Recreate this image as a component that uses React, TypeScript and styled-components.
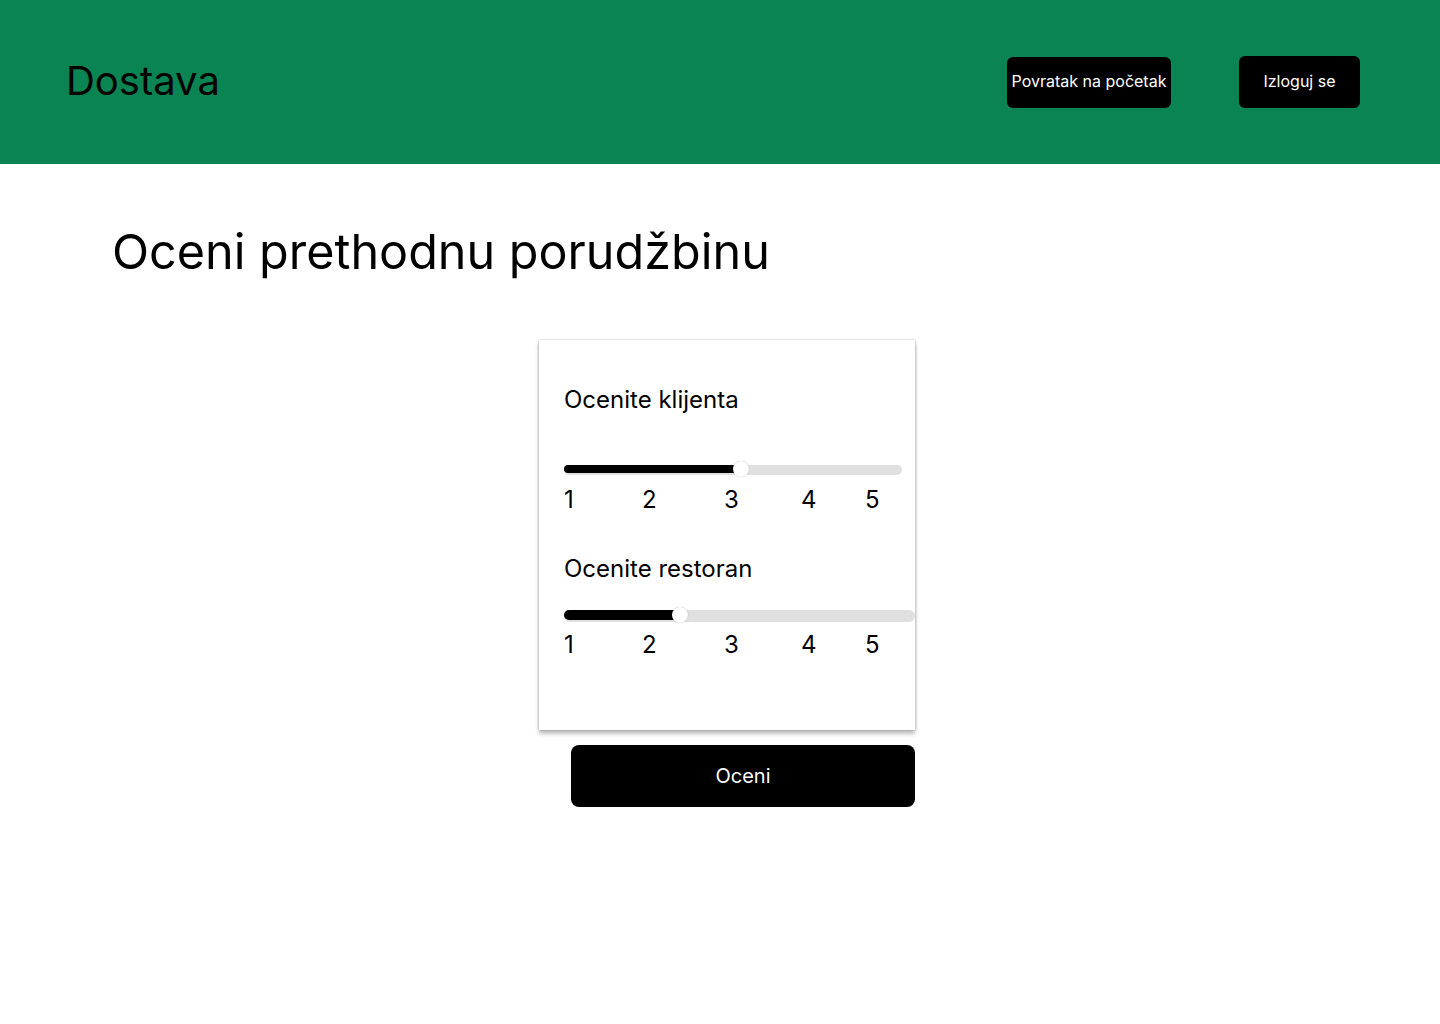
import styled, { createGlobalStyle } from 'styled-components';

const GlobalStyle = createGlobalStyle`
  body {
    margin: 0;
    background: #fff;
    font-family: Inter, "Noto Sans", sans-serif;
  }
`;

const Header = styled.header`
  height: 164px;
  background-color: #0a8452;
  display: flex;
  align-items: center;
  padding: 0 80px 0 66px;
  box-sizing: border-box;
`;

const Logo = styled.h1`
  margin: 0 auto 4px 0;
  font-size: 40px;
  font-weight: 400;
  color: #000;
`;

const NavButton = styled.button<{ $w: number; $h: number }>`
  width: ${(p) => p.$w}px;
  height: ${(p) => p.$h}px;
  margin-left: 68px;
  background: #000;
  color: #fff;
  border: none;
  border-radius: 6px;
  font-family: Inter, sans-serif;
  font-size: 16px;
  padding: 0 0 2px;
  white-space: nowrap;
`;

const Main = styled.main`
  padding: 59px 0 0 112px;
`;

const Title = styled.h2`
  margin: 0;
  font-size: 48.5px;
  line-height: 58px;
  font-weight: 400;
  color: #000;
`;

const Column = styled.div`
  margin: 59px 0 0 427px;
  width: 376px;
  display: flex;
  flex-direction: column;
  align-items: flex-end;
  gap: 15px;
`;

const Card = styled.div`
  width: 376px;
  height: 390px;
  box-sizing: border-box;
  padding: 45px 0 0 25px;
  background: #fff;
  box-shadow: 0 4px 4px rgba(0, 0, 0, 0.25), 1px 0 2px rgba(0, 0, 0, 0.15), -1px 0 2px rgba(0, 0, 0, 0.15);
`;

const Label = styled.div<{ $mt: number }>`
  margin-top: ${(p) => p.$mt}px;
  font-size: 24px;
  line-height: 29px;
  color: #000;
`;

const Track = styled.div<{ $w: number; $h: number; $mt: number }>`
  position: relative;
  width: ${(p) => p.$w}px;
  height: ${(p) => p.$h}px;
  margin-top: ${(p) => p.$mt}px;
  background: #e0e0e0;
  border-radius: ${(p) => p.$h / 2}px;
`;

const Fill = styled.div`
  height: calc(100% - 2px);
  background: #000;
  border-radius: 5px;
`;

const Thumb = styled.div`
  position: absolute;
  top: 50%;
  width: 16px;
  height: 16px;
  margin: -9px 0 0 -8px;
  border-radius: 50%;
  background: #fff;
  box-shadow: 0 0 1px rgba(0, 0, 0, 0.35);
`;

const Ticks = styled.div<{ $mt: number }>`
  display: flex;
  margin-top: ${(p) => p.$mt}px;
  font-size: 24px;
  line-height: 29px;
  color: #000;
`;

const Tick = styled.span<{ $w: number }>`
  width: ${(p) => p.$w}px;
`;

const SubmitButton = styled.button`
  width: 344px;
  height: 62px;
  background: #000;
  color: #fff;
  border: none;
  border-radius: 8px;
  font-family: Inter, sans-serif;
  font-size: 20px;
`;

const tickWidths = [78, 82, 77, 64, 20];

function Slider({
  width,
  height,
  mt,
  ticksMt,
  value,
}: {
  width: number;
  height: number;
  mt: number;
  ticksMt: number;
  value: number;
}) {
  return (
    <>
      <Track $w={width} $h={height} $mt={mt}>
        <Fill style={{ width: value }} />
        <Thumb style={{ left: value }} />
      </Track>
      <Ticks $mt={ticksMt}>
        {tickWidths.map((w, i) => (
          <Tick key={i} $w={w}>
            {i + 1}
          </Tick>
        ))}
      </Ticks>
    </>
  );
}

export default function App() {
  return (
    <>
      <GlobalStyle />
      <Header>
        <Logo>Dostava</Logo>
        <NavButton $w={164} $h={51}>Povratak na početak</NavButton>
        <NavButton $w={121} $h={52}>Izloguj se</NavButton>
      </Header>
      <Main>
        <Title>Oceni prethodnu porudžbinu</Title>
        <Column>
          <Card>
            <Label $mt={0}>Ocenite klijenta</Label>
            <Slider width={338} height={10} mt={51} ticksMt={10} value={177} />
            <Label $mt={40}>Ocenite restoran</Label>
            <Slider width={351} height={12} mt={27} ticksMt={8} value={116} />
          </Card>
          <SubmitButton>Oceni</SubmitButton>
        </Column>
      </Main>
    </>
  );
}
